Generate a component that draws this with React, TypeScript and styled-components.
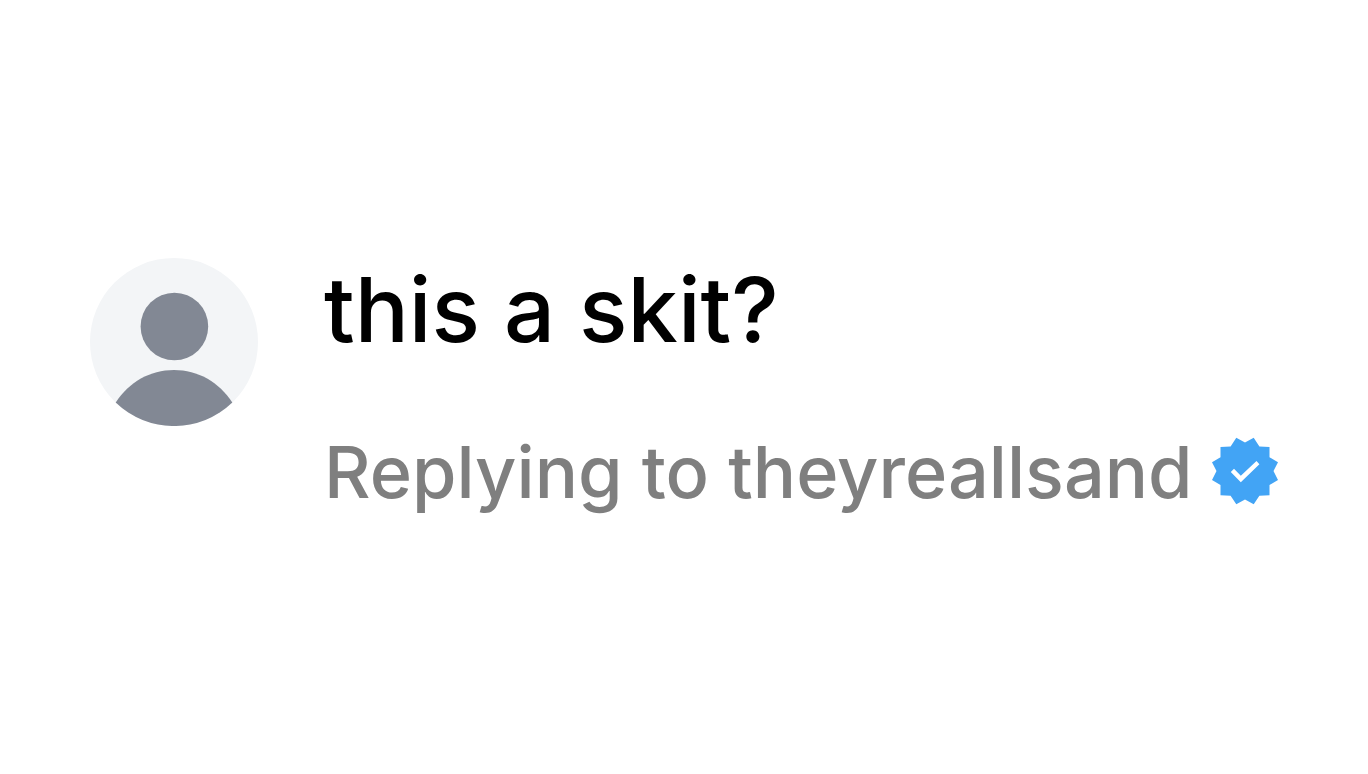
import React from 'react';
import styled, { createGlobalStyle } from 'styled-components';

const GlobalStyle = createGlobalStyle`
  * { box-sizing: border-box; }
  body { margin: 0; background: #fff; font-family: Inter, "Liberation Sans", sans-serif; font-weight: 500; }
`;
const Page = styled.main`
  min-height: 100vh;
  padding: 258px 88px 0 90px;
`;
const Comment = styled.article`
  display: flex;
  align-items: flex-start;
  gap: 66px;
`;
const Avatar = styled.svg`
  flex: none;
  width: 168px;
  height: 168px;
`;
const Body = styled.div`
  min-width: 0;
`;
const Message = styled.p`
  margin: 0;
  font-size: 90px;
  line-height: 104px;
  white-space: nowrap;
  color: #000;
`;
const Reply = styled.p`
  display: flex;
  align-items: center;
  gap: 18px;
  margin: 64px 0 0;
  font-size: 72px;
  line-height: 92px;
  white-space: nowrap;
  color: #7f7f7f;
`;
const Badge = styled.svg`
  flex: none;
  width: 68px;
  height: 70px;
`;

export default function App() {
  return (
    <Page>
      <GlobalStyle />
      <Comment>
        <Avatar viewBox="0 0 168 168" role="img" aria-label="Profile picture">
          <circle cx="84" cy="84" r="84" fill="#f3f5f7" />
          <circle cx="84.400" cy="68.500" r="33.800" fill="#828894" />
          <path d="M25.700 144.500C39 124 60 112 84 112S129 124 142.300 144.500A84 84 0 0 1 25.700 144.500Z" fill="#828894" />
        </Avatar>
        <Body>
          <Message>this a skit?</Message>
          <Reply>
            <span>Replying to theyreallsand</span>
            <Badge viewBox="0 0 68 70" role="img" aria-label="Verified">
              <path d="M25.300 .8 34 5.500 42.700 .8 48.400 9.500 58.500 10V20.200L67 25.200 62.500 34 67 42.900 58.500 48V58.200L48.400 58.700 42.700 67.200 34 62.600 25.300 67.200 19.600 58.700 9.500 58.200V48L1 42.900 5.500 34 1 25.200 9.500 20.200V10L19.600 9.500Z" fill="#42a4f5" />
              <path d="M19.800 35 23 31.800 29.800 38.700 45.500 24 48.400 27.300 29.800 45.200Z" fill="#fff" />
            </Badge>
          </Reply>
        </Body>
      </Comment>
    </Page>
  );
}
